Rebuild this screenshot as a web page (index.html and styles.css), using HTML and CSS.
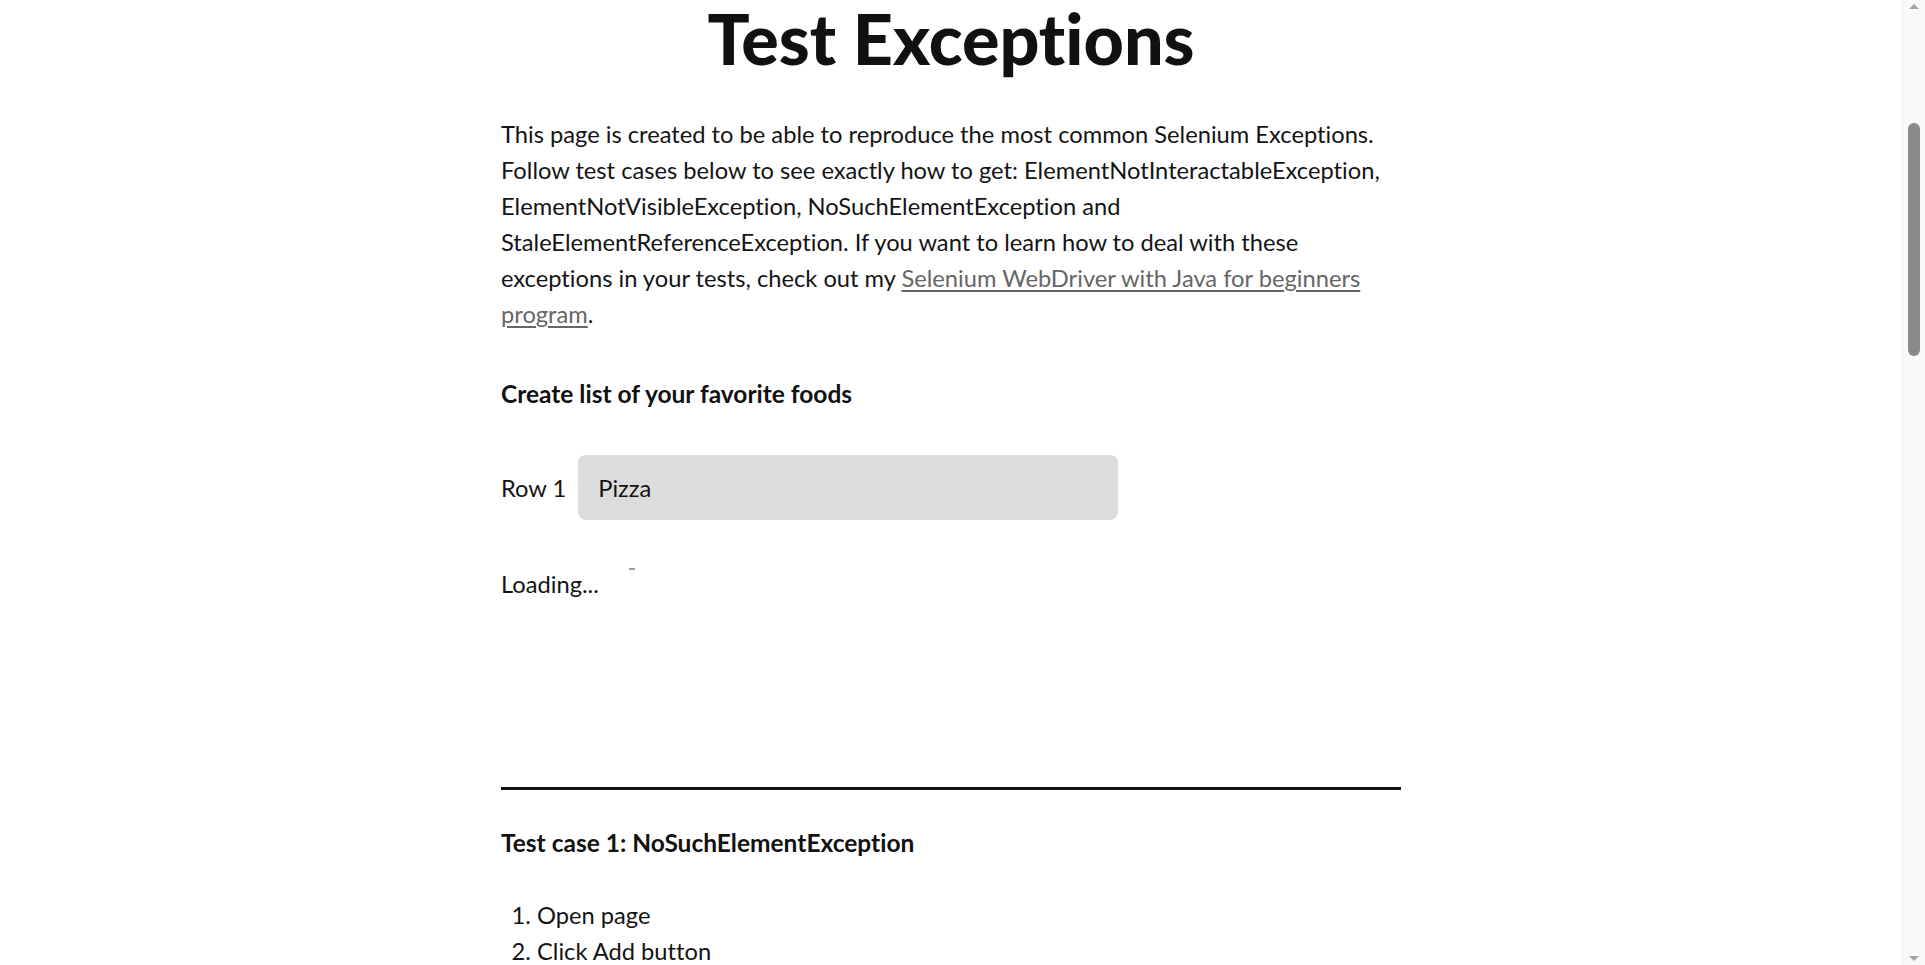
FILE: index.html
```html
<!DOCTYPE html>
<html lang="en">
<head>
<meta charset="utf-8">
<title>Test Exceptions</title>
<link rel="stylesheet" href="styles.css">
</head>
<body>
<main class="page">
  <h1 class="title">Test Exceptions</h1>
  <p class="intro">This page is created to be able to reproduce the most common Selenium Exceptions. Follow test cases below to see exactly how to get: ElementNotInteractableException, ElementNotVisibleException, NoSuchElementException and StaleElementReferenceException. If you want to learn how to deal with these exceptions in your tests, check out my <a class="link" href="#">Selenium WebDriver with Java for beginners program</a>.</p>

  <h5 class="subhead">Create list of your favorite foods</h5>

  <div class="row">
    <label class="row-label" for="row1">Row 1</label>
    <input class="row-input" id="row1" type="text" value="Pizza" disabled>
  </div>

  <div class="loading">Loading... <span class="dash"></span></div>

  <hr class="rule">

  <section class="case">
    <h5 class="case-title">Test case 1: NoSuchElementException</h5>
    <ol class="steps">
      <li>Open page</li>
      <li>Click Add button</li>
      <li>Verify Row 2 input field is displayed</li>
    </ol>
  </section>

  <section class="case">
    <h5 class="case-title">Test case 2: ElementNotInteractableException</h5>
    <ol class="steps">
      <li>Open page</li>
      <li>Click Add button</li>
      <li>Wait for the second row to load</li>
      <li>Type text into the second input field</li>
      <li>Push Save button using locator By.name(“Save”)</li>
      <li>Verify text saved</li>
    </ol>
  </section>

  <section class="case">
    <h5 class="case-title">Test case 3: InvalidElementStateException</h5>
    <ol class="steps">
      <li>Open page</li>
      <li>Clear input field</li>
      <li>Type text into the input field</li>
      <li>Verify text changed</li>
    </ol>
  </section>

  <section class="case">
    <h5 class="case-title">Test case 4: StaleElementReferenceException</h5>
    <ol class="steps">
      <li>Open page</li>
      <li>Find the instructions text element</li>
      <li>Push add button</li>
      <li>Verify instruction text element is no longer displayed</li>
    </ol>
  </section>

  <section class="case">
    <h5 class="case-title">Test case 5: TimeoutException</h5>
    <ol class="steps">
      <li>Open page</li>
      <li>Click Add button</li>
      <li>Wait for 3 seconds for the second input field to be displayed</li>
      <li>Verify second input field is displayed</li>
    </ol>
  </section>
</main>

<div class="scrollbar" aria-hidden="true">
  <span class="sb-arrow sb-up"></span>
  <span class="sb-thumb"></span>
  <span class="sb-arrow sb-down"></span>
</div>
</body>
</html>
```

FILE: styles.css
```css
html, body {
  padding: 0;
  background: #ffffff;
}

html {
  margin: 0;
}

body {
  margin: 0 23px 0 0;
  font-family: Lato, "Open Sans", "Liberation Sans", sans-serif;
  font-size: 23.7px;
  line-height: 36px;
  color: #141414;
  font-variant-ligatures: none;
}

.page {
  width: 900px;
  margin-left: calc(50% - 450px);
  padding-bottom: 200px;
}

.title {
  margin: 0;
  font-size: 70px;
  line-height: 76px;
  font-weight: 900;
  text-align: center;
  color: #111111;
}

.intro {
  margin: 40px 0 0;
}

.link {
  color: #666666;
  text-decoration: underline;
  text-underline-offset: 3px;
}

.subhead,
.case-title {
  margin: 44px 0 0;
  font-size: 24.5px;
  line-height: 36px;
  font-weight: 700;
  color: #111111;
}

.row {
  display: flex;
  align-items: center;
  gap: 12px;
  margin-top: 43px;
}

.row-label {
  line-height: 36px;
}

.row-input {
  box-sizing: border-box;
  width: 540px;
  height: 65px;
  padding: 0 20px;
  border: 0;
  border-radius: 8px;
  background: #dcdcdc;
  font-family: inherit;
  font-size: 23.7px;
  color: #141414;
  -webkit-text-fill-color: #141414;
  opacity: 1;
}

.loading {
  margin-top: 46px;
  position: relative;
}

.dash {
  position: absolute;
  left: 128px;
  top: 2px;
  width: 6px;
  height: 2px;
  background: #9a9a9a;
}

.rule {
  margin: 185px 0 0;
  border: 0;
  height: 3px;
  background: #111111;
}

.case-title {
  margin-top: 35px;
}

.steps {
  margin: 36px 0 0;
  padding-left: 36px;
}

/* browser scrollbar, drawn as a fixed overlay */
.scrollbar {
  position: fixed;
  top: 0;
  right: 0;
  width: 23px;
  height: 100%;
  background: #f9f9f9;
  border-left: 1px solid #f0f0f0;
  box-sizing: border-box;
}

.sb-arrow {
  position: absolute;
  left: 6px;
  width: 0;
  height: 0;
  border-left: 5px solid transparent;
  border-right: 5px solid transparent;
}

.sb-up {
  top: 4px;
  border-bottom: 5px solid #a3a3a3;
}

.sb-down {
  bottom: 4px;
  border-top: 5px solid #a3a3a3;
}

.sb-thumb {
  position: absolute;
  top: 123px;
  left: 5px;
  width: 12px;
  height: 233px;
  border-radius: 6px;
  background: #8a8a8a;
}
```
